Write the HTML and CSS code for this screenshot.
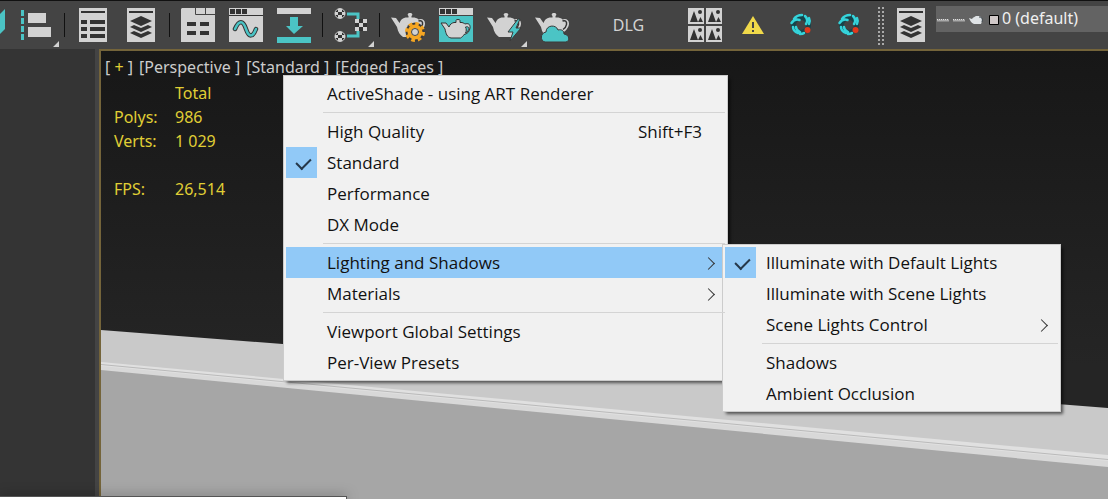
FILE: index.html
```html
<!DOCTYPE html>
<html lang="en">

<head>
    <meta charset="UTF-8">
    <meta name="viewport" content="width=device-width, initial-scale=1.0">
    <title>Viewport</title>
    <link rel="stylesheet" href="styles.css">
</head>

<body>
    <!-- shared shapes -->
    <svg class="defs" width="0" height="0" aria-hidden="true">
        <symbol id="teapot" viewBox="0 0 48 48">
            <path fill="#d2d2d2" d="M7 16.500l5 .5 3.500 5c1-3 3-5 6-5.500h3v-1.500c-1.500-1-1-3 1.500-3s3 2 1.500 3v1.500h3c2 .5 3 1 4 2 3-1.500 6.500 0 6.500 4s-3.500 8-7 9.500c-1 2-2 3-3 4H19c-3-2-5-5-6-10z" />
            <path fill="none" stroke="#343434" stroke-width="1.500" d="M34.500 20c3-1 4.500.5 4 3.500s-2 4-3.500 5" />
        </symbol>
        <symbol id="layers" viewBox="0 0 48 48">
            <path fill="#d2d2d2" d="M10 7h28v34H10z" />
            <path fill="#333" d="M12 10h24v2H12zM24 15l11 5-11 5-11-5zM13 26l4-2 7 3 7-3 4 2-11 5zM13 32l4-2 7 3 7-3 4 2-11 5z" />
        </symbol>
        <symbol id="swirl" viewBox="0 0 48 48">
            <circle cx="24" cy="24" r="7.500" fill="none" stroke="#16434a" stroke-width="5" />
            <g fill="none" stroke="#35d3da" stroke-width="2.500" stroke-linecap="round">
                <path d="M14.500 22c2-3 5-4 8-3M17 18c2-3 5-4 8-4M28 15c2 2 3 5 1 8M32 17c1 2 1 4 0 6M16 26c0 3 2 5 5 6M19 26c0 2 2 4 4 5M23 33c2 0 3 0 4-1" />
            </g>
            <circle cx="30.500" cy="29" r="3" fill="#e2391c" />
        </symbol>
    </svg>

    <header class="toolbar">
        <button class="tool tool-cut" aria-label="Mirror"><svg width="12" height="48"><path fill="#4bc4c5" d="M0 13l5-5v20l-5 5z" /></svg></button>
        <button class="tool" aria-label="Align">
            <svg viewBox="0 0 48 48">
                <path stroke="#4bc4c5" stroke-width="3" stroke-dasharray="6 2" d="M10.500 9v30" />
                <path fill="#d2d2d2" d="M16 12h18v10H16zM16 26h23v10H16zM47 40v6h-6z" />
            </svg>
        </button>
        <span class="divider"></span>
        <button class="tool" aria-label="Scene Explorer">
            <svg viewBox="0 0 48 48">
                <path fill="#d2d2d2" d="M10 7h28v34H10z" />
                <path fill="#333" d="M12 10h24v2H12zM12 19h6v4h-6zM21 19h15v4H21zM12 26h6v4h-6zM21 26h15v4H21zM12 33h6v4h-6zM21 33h15v4H21z" />
            </svg>
        </button>
        <button class="tool" aria-label="Layer Explorer"><svg><use href="#layers" /></svg></button>
        <span class="divider"></span>
        <button class="tool" aria-label="Ribbon">
            <svg viewBox="0 0 48 48">
                <path fill="#d2d2d2" d="M8 7h33v34H7V8z" />
                <path fill="none" stroke="#444" d="M21.500 7v6.500H41M31.500 7v6" />
                <path fill="#333" d="M13 21h9v4h-9zM26 21h9v4h-9zM13 30h9v4h-9zM26 30h9v4h-9z" />
            </svg>
        </button>
        <button class="tool" aria-label="Curve Editor">
            <svg viewBox="0 0 48 48">
                <path fill="#d2d2d2" d="M7 7h34v34H7z" />
                <path fill="#333" d="M8 8h5v5H8zM14 8h5v5h-5zM20 8h5v5h-5zM7 14h34v1H7z" />
                <g fill="none" stroke-linecap="round">
                    <path stroke="#333" stroke-width="4.500" d="M13 28c4-9 8-9 11 0s7 8 10 0" />
                    <path stroke="#4bc4c5" stroke-width="2.500" d="M13 28c4-9 8-9 11 0s7 8 10 0" />
                </g>
            </svg>
        </button>
        <button class="tool" aria-label="Schematic View">
            <svg viewBox="0 0 48 48">
                <path fill="#d2d2d2" d="M7 7h34v6H7z" />
                <path fill="#4bc4c5" d="M7 36h34v6H7zM20 16h8v9h5l-9 8-8-8h4z" />
            </svg>
        </button>
        <span class="divider"></span>
        <button class="tool" aria-label="Material Editor">
            <svg viewBox="0 0 48 48">
                <path fill="none" stroke="#4bc4c5" stroke-width="3" d="M20 13h11v6M20 35h11v-6" />
                <g fill="#333" stroke="#d2d2d2">
                    <circle cx="13" cy="12.500" r="5" />
                    <circle cx="13" cy="35.500" r="5" />
                </g>
                <path fill="#d2d2d2" d="M11 8h4v3h-4zM8 11h3v3H8zM15 11h3v3h-3zM11 14h4v3h-4zM11 31h4v3h-4zM8 34h3v3H8zM15 34h3v3h-3zM11 37h4v3h-4z" />
                <path fill="#333" d="M28 18h12v12H28z" />
                <path fill="#d2d2d2" d="M28 18h4v4h-4zM36 18h4v4h-4zM32 22h4v4h-4zM28 26h4v4h-4zM36 26h4v4h-4zM47 40v6h-6z" />
            </svg>
        </button>
        <span class="divider"></span>
        <button class="tool" aria-label="Render Setup">
            <svg viewBox="0 0 48 48">
                <use href="#teapot" width="48" height="48" />
                <circle cx="31" cy="31" r="9.500" fill="#3a3a3a" />
                <circle cx="31" cy="31" r="8.500" fill="none" stroke="#f5a623" stroke-width="3" stroke-dasharray="3.700 2.975" />
                <circle cx="31" cy="31" r="5.500" fill="#d2d2d2" stroke="#f5a623" stroke-width="4" />
                <circle cx="31" cy="31" r="3.500" fill="#d2d2d2" stroke="#444" />
            </svg>
        </button>
        <button class="tool" aria-label="Rendered Frame Window">
            <svg viewBox="0 0 48 48">
                <path fill="#4bc4c5" d="M7 15h34v26H7z" />
                <path fill="#d2d2d2" d="M7 7h34v7H7z" />
                <path fill="#333" d="M8 8h5v5H8zM14 8h5v5h-5zM20 8h5v5h-5z" />
                <path fill="#d2d2d2" stroke="#333" d="M9 22h5l3 4c1-3 3-4 5-4.500h2v-1.500c-1-2 5-2 4 0v1.500h2c1.500.5 2.500 1 3 1.500 3-1 5.500 0 5 4s-3 6-6 6.500c-1 2-2 2.500-3.500 3.500H19c-4-1-5-4-6-9z" />
                <path fill="#4bc4c5" stroke="#333" d="M33.500 26c3-1 4 1 3 3s-2 2.500-3 3c1-2 1-4 0-6z" />
            </svg>
        </button>
        <button class="tool" aria-label="Render Production">
            <svg viewBox="0 0 48 48">
                <use href="#teapot" width="48" height="48" />
                <path fill="#4bc4c5" stroke="#3a3a3a" d="M38 18l-10 13h5l-3 9 11-13h-5l4-9z" />
                <path fill="#d2d2d2" d="M47 40v6h-6z" />
            </svg>
        </button>
        <button class="tool" aria-label="Render in the Cloud">
            <svg viewBox="0 0 48 48">
                <use href="#teapot" width="48" height="48" />
                <path fill="#4bc4c5" stroke="#3a3a3a" d="M17 41c-5-1-5-9 1-10 0-7 10-8 12-2 4-1 6 1 6 4 6 1 6 7 2 8z" />
            </svg>
        </button>
        <button class="tool tool-text">DLG</button>
        <button class="tool" aria-label="Asset Library">
            <svg viewBox="0 0 48 48">
                <path fill="#d2d2d2" d="M7 7h16v16H7zM25 7h16v16H25zM7 25h16v16H7zM25 25h16v16H25z" />
                <path fill="#333" d="M9 21l4-11 4 11zM17 21l2.500-5 2.500 5zM27 21l4-11 4 11zM35 21l2.500-5 2.500 5zM9 39l4-11 4 11zM17 39l2.500-5 2.500 5zM27 39l4-11 4 11zM35 39l2.500-5 2.500 5z" />
                <g fill="#333">
                    <circle cx="19" cy="11" r="2" />
                    <circle cx="37" cy="11" r="2" />
                    <circle cx="19" cy="29" r="2" />
                    <circle cx="37" cy="29" r="2" />
                </g>
            </svg>
        </button>
        <button class="tool" aria-label="Warnings">
            <svg viewBox="0 0 48 48">
                <path fill="#f0d94a" d="M24 15l11 18H13z" />
                <path fill="#444" d="M23 21h2v6h-2zM23 29h2v2h-2z" />
            </svg>
        </button>
        <button class="tool" aria-label="Cycle"><svg><use href="#swirl" /></svg></button>
        <button class="tool" aria-label="Cycle all"><svg><use href="#swirl" /></svg></button>
        <span class="grip"></span>
        <button class="tool" aria-label="Layers"><svg><use href="#layers" /></svg></button>
        <div class="layer-box">
            <svg width="64" height="26" aria-hidden="true">
                <path stroke="#aaa" stroke-width="2" d="M1 14.500h12M17 14.500h12" />
                <path stroke="#ddd" stroke-dasharray="1 1" d="M1 13.500h12M17 13.500h12" />
                <path fill="#dfe3e6" d="M33 12l3 1c1-2 3-2 4-3h3c3 1 4 4 2 8h-7c-3-1-4-4-5-6z" />
                <path fill="none" stroke="#434c52" d="M43 11c3 0 4 2 3 5" />
                <path fill="#d0c8c8" stroke="#000" d="M53.500 9.500h9v9h-9z" />
            </svg>
            <select aria-label="Current layer">
                <option>0 (default)</option>
            </select>
        </div>
    </header>

    <main class="workspace">
        <aside class="side-panel"></aside>
        <section class="viewport">
            <svg class="scene" viewBox="0 0 1007 448" preserveAspectRatio="none" aria-hidden="true">
                <path fill="#c9c9c9" d="M0 279L1007 357V448H0z" />
                <path fill="#e0e0e0" d="M0 311L1007 404V448H0z" />
                <path fill="#d8d8d8" d="M0 315L1007 410V448H0z" />
                <path stroke="#bababa" d="M0 313.500L1007 408.500" />
                <path fill="#a6a6a6" d="M0 319L1007 416V448H0z" />
            </svg>

            <nav class="view-labels">
                <button>[ <span class="plus">+</span> ]</button>
                <button>[Perspective ]</button>
                <button>[Standard ]</button>
                <button>[Edged Faces ]</button>
            </nav>

            <table class="stats">
                <tr><th></th><td>Total</td></tr>
                <tr><th>Polys:</th><td>986</td></tr>
                <tr><th>Verts:</th><td>1 029</td></tr>
                <tr class="fps"><th>FPS:</th><td>26,514</td></tr>
            </table>

            <ul class="menu main-menu">
                <li><button>ActiveShade - using ART Renderer</button></li>
                <li class="line"></li>
                <li><button>High Quality <span class="shortcut">Shift+F3</span></button></li>
                <li><button class="checked">Standard</button></li>
                <li><button>Performance</button></li>
                <li><button>DX Mode</button></li>
                <li class="line"></li>
                <li class="open">
                    <button class="more">Lighting and Shadows</button>
                    <ul class="menu sub-menu">
                        <li><button class="checked">Illuminate with Default Lights</button></li>
                        <li><button>Illuminate with Scene Lights</button></li>
                        <li><button class="more">Scene Lights Control</button></li>
                        <li class="line"></li>
                        <li><button>Shadows</button></li>
                        <li><button>Ambient Occlusion</button></li>
                    </ul>
                </li>
                <li><button class="more">Materials</button></li>
                <li class="line"></li>
                <li><button>Viewport Global Settings</button></li>
                <li><button>Per-View Presets</button></li>
            </ul>
        </section>
        <div class="tray"></div>
    </main>
</body>

</html>
```
FILE: styles.css
```css
* {
    box-sizing: border-box;
}

body {
    margin: 0;
    display: flex;
    flex-direction: column;
    height: 100vh;
    overflow: hidden;
    background: #444;
    font-family: "Noto Sans", "Open Sans", sans-serif;
    font-size: 16px;
}

button {
    margin: 0;
    padding: 0;
    border: none;
    background: none;
    font: inherit;
    color: inherit;
}

.defs {
    position: absolute;
}

/* toolbar */
.toolbar {
    display: flex;
    flex-shrink: 0;
    border-top: 1px solid #111;
    background: #444;
}

.tool {
    flex: 0 0 48px;
    height: 48px;
}

.tool svg {
    display: block;
    width: 48px;
    height: 48px;
}

.tool-cut,
.tool-cut svg {
    flex-basis: 12px;
    width: 12px;
}

.tool-text {
    flex-basis: 105px;
    color: #d2d2d2;
}

.divider {
    flex: 0 0 9px;
    height: 24px;
    margin-top: 12px;
    background: linear-gradient(#111, #111) center / 1px 100% no-repeat;
}

.grip {
    flex: 0 0 6px;
    height: 38px;
    margin: 6px 3px 0 5px;
    background: repeating-linear-gradient(transparent 0 2px, #444 2px 4px), linear-gradient(90deg, #aaa 2px, transparent 2px 4px, #aaa 4px);
}

.layer-box {
    display: flex;
    flex: 1 0 auto;
    height: 26px;
    margin: 5px 0 0 1px;
    background: #636363;
}

.layer-box select {
    flex: 1;
    padding: 0 0 2px 2px;
    border: none;
    background: none;
    appearance: none;
    font: inherit;
    color: #f0f0f0;
}

/* workspace */
.workspace {
    position: relative;
    display: flex;
    flex: 1;
    min-height: 0;
}

.side-panel {
    flex: 0 0 95px;
    margin-right: 4px;
    background: #343434;
}

.viewport {
    position: relative;
    flex: 1;
    border: 2px solid #74643a;
    border-width: 2px 0 0 2px;
    background: linear-gradient(#171717, #252525 70%);
}

.scene {
    position: absolute;
    width: 100%;
    height: 100%;
}

.view-labels {
    position: relative;
    display: flex;
    gap: 6px;
    padding: 4px 4px 2px;
    line-height: 24px;
    color: #ccc;
}

.view-labels button {
    white-space: nowrap;
}

.plus,
.stats {
    color: #e0cf35;
}

.stats {
    position: relative;
    margin-left: 13px;
    border-collapse: collapse;
    line-height: 24px;
}

.stats th {
    width: 61px;
    padding: 0;
    font-weight: normal;
    text-align: left;
}

.stats td {
    padding: 0;
}

.fps th,
.fps td {
    padding-top: 24px;
}

/* menus */
.menu {
    position: absolute;
    margin: 0;
    padding: 2px;
    list-style: none;
    border: 1px solid #ccc;
    background: #f1f1f1;
    box-shadow: 3px 3px 3px -1px rgba(0, 0, 0, 0.6);
    font-family: "Open Sans", "Noto Sans", sans-serif;
    font-size: 17px;
    color: #111;
}

.main-menu {
    top: 24px;
    left: 182px;
    width: 445px;
}

.sub-menu {
    top: -3px;
    left: calc(100% - 3px);
    width: 339px;
}

.menu li {
    position: relative;
}

.menu button {
    display: flex;
    align-items: center;
    justify-content: space-between;
    width: 100%;
    height: 31px;
    padding: 0 23px 0 41px;
    white-space: nowrap;
}

.menu .line {
    height: 7px;
    margin-left: 37px;
    background: linear-gradient(#d4d4d4, #d4d4d4) center / 100% 1px no-repeat;
}

.menu .open > button {
    background: #91c9f7;
}

.menu .checked {
    background: linear-gradient(#91c9f7, #91c9f7) left / 31px 100% no-repeat;
}

.checked::before {
    content: "";
    position: absolute;
    top: 8px;
    left: 13px;
    width: 7px;
    height: 12px;
    border: solid #26384a;
    border-width: 0 2px 2px 0;
    transform: rotate(45deg);
}

.more::after {
    content: "";
    position: absolute;
    top: 12px;
    right: 12px;
    width: 8px;
    height: 8px;
    border: solid #333;
    border-width: 1px 1px 0 0;
    transform: rotate(45deg);
}

/* edge of the window below */
.tray {
    position: absolute;
    bottom: 0;
    left: 0;
    width: 347px;
    height: 3px;
    border: 1px solid #555;
    border-width: 1px 1px 0 0;
    background: #fff;
    box-shadow: 0 0 12px rgba(0, 0, 0, 0.5);
}
```
